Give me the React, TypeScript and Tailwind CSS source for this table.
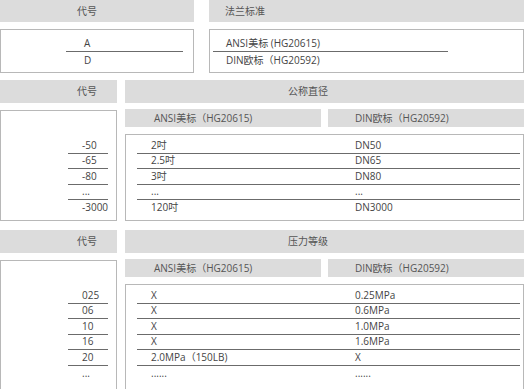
import React from 'react';

const Row = ({ a, b, last }: { a: string; b: string; last?: boolean }) => (
  <div className={`flex h-[15.5px] items-center ${last ? '' : 'border-b border-[#6b6b6b]'}`}>
    <div className="w-[218px] pl-[14px]">{a}</div>
    <div>{b}</div>
  </div>
);

const CodeRow = ({ c, last }: { c: string; last?: boolean }) => (
  <div className={`flex h-[15.5px] items-center pl-[14px] ${last ? '' : 'border-b border-[#6b6b6b]'}`}>{c}</div>
);

type Section = {
  title: string;
  rows: { code: string; ansi: string; din: string }[];
  tail: number;
};

const TableSection = ({ title, rows, tail }: Section) => (
  <div className="flex gap-[8px] pr-[3px]">
    <div className="w-[117px] shrink-0">
      <div className="h-[23px] bg-[#dcdcdc] pl-[77px] leading-[23px] text-[#555]">代号</div>
      <div className="mt-[7px] border border-[#b8b8b8] pt-[27px]" style={{ height: tail }}>
        <div className="ml-[67px] w-[40px]">
          {rows.map((r, i) => (
            <CodeRow key={i} c={r.code} last={i === rows.length - 1} />
          ))}
        </div>
      </div>
    </div>
    <div className="flex-1">
      <div className="h-[23px] bg-[#dcdcdc] pl-[163px] leading-[23px] text-[#555]">{title}</div>
      <div className="mt-[6px] flex gap-[7px]">
        <div className="h-[18px] w-[196px] bg-[#dcdcdc] pl-[29px] leading-[18px] text-[#555]">ANSI美标（HG20615)</div>
        <div className="h-[18px] flex-1 bg-[#dcdcdc] pl-[27px] leading-[18px] text-[#555]">DIN欧标（HG20592)</div>
      </div>
      <div className="mt-[7px] border border-[#b8b8b8] pt-[3px]" style={{ height: tail - 24 }}>
        <div className="ml-[11px] w-[383px]">
          {rows.map((r, i) => (
            <Row key={i} a={r.ansi} b={r.din} last={i === rows.length - 1} />
          ))}
        </div>
      </div>
    </div>
  </div>
);

const sizes = [
  { code: '-50', ansi: '2吋', din: 'DN50' },
  { code: '-65', ansi: '2.5吋', din: 'DN65' },
  { code: '-80', ansi: '3吋', din: 'DN80' },
  { code: '...', ansi: '...', din: '...' },
  { code: '-3000', ansi: '120吋', din: 'DN3000' },
];

const pressures = [
  { code: '025', ansi: 'X', din: '0.25MPa' },
  { code: '06', ansi: 'X', din: '0.6MPa' },
  { code: '10', ansi: 'X', din: '1.0MPa' },
  { code: '16', ansi: 'X', din: '1.6MPa' },
  { code: '20', ansi: '2.0MPa（150LB)', din: 'X' },
  { code: '...', ansi: '......', din: '......' },
];

const App: React.FC = () => {
  return (
    <div className="h-[389px] w-[527px] overflow-hidden bg-white font-['Open_Sans','Noto_Sans_CJK_SC',sans-serif] text-[10px] text-[#444]">
      {/* Flange standard */}
      <div className="flex pr-[3px]">
        <div className="w-[194px] shrink-0">
          <div className="h-[22px] bg-[#dcdcdc] pl-[77px] leading-[22px] text-[#555]">代号</div>
          <div className="mt-[7px] h-[44px] border border-[#b8b8b8] pt-[5px]">
            <div className="ml-[65px] w-[117px]">
              <div className="h-[17px] border-b border-[#6b6b6b] pl-[18px] leading-[16px]">A</div>
              <div className="h-[17px] pl-[18px] leading-[17px]">D</div>
            </div>
          </div>
        </div>
        <div className="ml-[15px] flex-1">
          <div className="h-[22px] bg-[#dcdcdc] pl-[16px] leading-[22px] text-[#555]">法兰标准</div>
          <div className="mt-[7px] h-[44px] border border-[#b8b8b8] pt-[5px]">
            <div className="ml-[3px] w-[235px]">
              <div className="h-[17px] border-b border-[#6b6b6b] pl-[13px] leading-[16px]">ANSI美标 (HG20615)</div>
              <div className="h-[17px] pl-[13px] leading-[17px]">DIN欧标（HG20592)</div>
            </div>
          </div>
        </div>
      </div>

      <div className="mt-[7px]">
        <TableSection title="公称直径" rows={sizes} tail={111} />
      </div>
      <div className="mt-[9px]">
        <TableSection title="压力等级" rows={pressures} tail={140} />
      </div>
    </div>
  );
};

export default App;
